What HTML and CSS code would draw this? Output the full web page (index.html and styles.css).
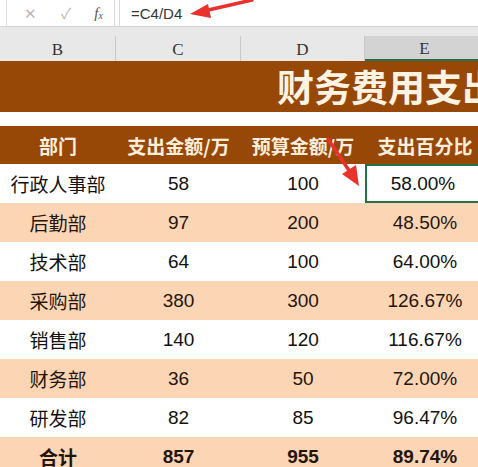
FILE: index.html
```html
<!DOCTYPE html>
<html lang="zh">
<head>
<meta charset="utf-8">
<link rel="stylesheet" href="styles.css">
</head>
<body>
<div class="page">
  <div class="toolbar">
    <div class="fnbox">
      <span class="ic ic-x">✕</span>
      <span class="ic ic-ok">✓</span>
      <span class="ic ic-fx">f<sub>x</sub></span>
    </div>
    <div class="formula">=C4/D4</div>
  </div>
  <div class="colheads">
    <div class="ch">B</div>
    <div class="ch">C</div>
    <div class="ch">D</div>
    <div class="ch sel">E</div>
  </div>
  <div class="titleband"><span class="title">财务费用支出统计表</span></div>
  <div class="spacer"></div>
  <div class="grid">
    <div class="hd">部门</div><div class="hd">支出金额/万</div><div class="hd">预算金额/万</div><div class="hd">支出百分比</div>

    <div class="c">行政人事部</div><div class="c">58</div><div class="c">100</div><div class="c active">58.00%</div>
    <div class="c p">后勤部</div><div class="c p">97</div><div class="c p">200</div><div class="c p">48.50%</div>
    <div class="c">技术部</div><div class="c">64</div><div class="c">100</div><div class="c">64.00%</div>
    <div class="c p">采购部</div><div class="c p">380</div><div class="c p">300</div><div class="c p">126.67%</div>
    <div class="c">销售部</div><div class="c">140</div><div class="c">120</div><div class="c">116.67%</div>
    <div class="c p">财务部</div><div class="c p">36</div><div class="c p">50</div><div class="c p">72.00%</div>
    <div class="c">研发部</div><div class="c">82</div><div class="c">85</div><div class="c">96.47%</div>
    <div class="c p b">合计</div><div class="c p b">857</div><div class="c p b">955</div><div class="c p b">89.74%</div>
  </div>
  <svg class="arrows" width="478" height="467" viewBox="0 0 478 467">
    <line x1="252" y1="0" x2="204" y2="11" stroke="#e8322b" stroke-width="3.5" stroke-linecap="round"/>
    <polygon points="190,14 208,4 211,18" fill="#e8322b"/>
    <line x1="328" y1="139" x2="350" y2="172" stroke="#e8322b" stroke-width="3.5" stroke-linecap="round"/>
    <polygon points="359,186 342,174 356,165" fill="#e8322b"/>
  </svg>
</div>
</body>
</html>
```

FILE: styles.css
```css
* { box-sizing: border-box; }
html, body { margin: 0; padding: 0; background: #fff; }
.page {
  position: relative;
  width: 478px;
  height: 467px;
  overflow: hidden;
  font-family: "Liberation Sans", "Noto Sans CJK SC", sans-serif;
}
.toolbar {
  height: 27px;
  display: flex;
  background: #fff;
  border-bottom: 1px solid #d6d6d6;
}
.fnbox {
  margin-left: 6px;
  width: 109px;
  border-left: 1px solid #e2e2e2;
  border-right: 1px solid #d8d8d8;
  display: flex;
  align-items: center;
}
.ic { color: #b8b8b8; font-size: 15px; line-height: 1; }
.ic-x { margin-left: 17px; }
.ic-ok { margin-left: 24px; }
.ic-fx {
  margin-left: 23px;
  color: #555;
  font-family: "Liberation Serif", serif;
  font-style: italic;
  font-size: 15px;
}
.ic-fx sub { font-size: 10px; vertical-align: -1px; }
.formula {
  margin-left: 4px;
  flex: 1;
  border-left: 1px solid #d8d8d8;
  padding-left: 11px;
  font-size: 15px;
  color: #333;
  display: flex;
  align-items: center;
}
.colheads {
  height: 34px;
  background: #e8e8e8;
  padding-top: 9px;
  display: grid;
  grid-template-columns: 116px 125px 124px 120px;
}
.ch {
  border-right: 1px solid #c8c8c8;
  font-family: "Liberation Serif", serif;
  font-size: 17px;
  color: #333;
  display: flex;
  align-items: center;
  justify-content: center;
  padding-top: 2px;
}
.ch.sel {
  background: #d3d3d3;
  border-bottom: 2px solid #217346;
}
.titleband {
  height: 51px;
  background: #974706;
  padding-left: 277px;
  display: flex;
  align-items: center;
  white-space: nowrap;
  overflow: hidden;
}
.title {
  font-family: "Noto Sans CJK SC", sans-serif;
  font-weight: 700;
  font-size: 37px;
  color: #fdf3e2;
  line-height: 1;
}
.spacer { height: 14px; background: #fff; }
.grid {
  display: grid;
  grid-template-columns: 116px 125px 124px 120px;
  grid-template-rows: 38px repeat(8, 39px);
}
.hd {
  background: #974706;
  color: #fbeedd;
  font-family: "Noto Sans CJK SC", sans-serif;
  font-weight: 700;
  font-size: 19px;
  display: flex;
  align-items: center;
  justify-content: center;
  white-space: nowrap;
}
.c {
  display: flex;
  align-items: center;
  justify-content: center;
  font-size: 19px;
  color: #111;
  white-space: nowrap;
  background: #fff;
}
.c.p { background: #fcd5b4; color: #24150c; }
.c.b { font-weight: 700; }
.c.active {
  border: 2px solid #217346;
  border-right: none;
  padding-right: 6px;
}
.arrows { position: absolute; left: 0; top: 0; pointer-events: none; }
```
